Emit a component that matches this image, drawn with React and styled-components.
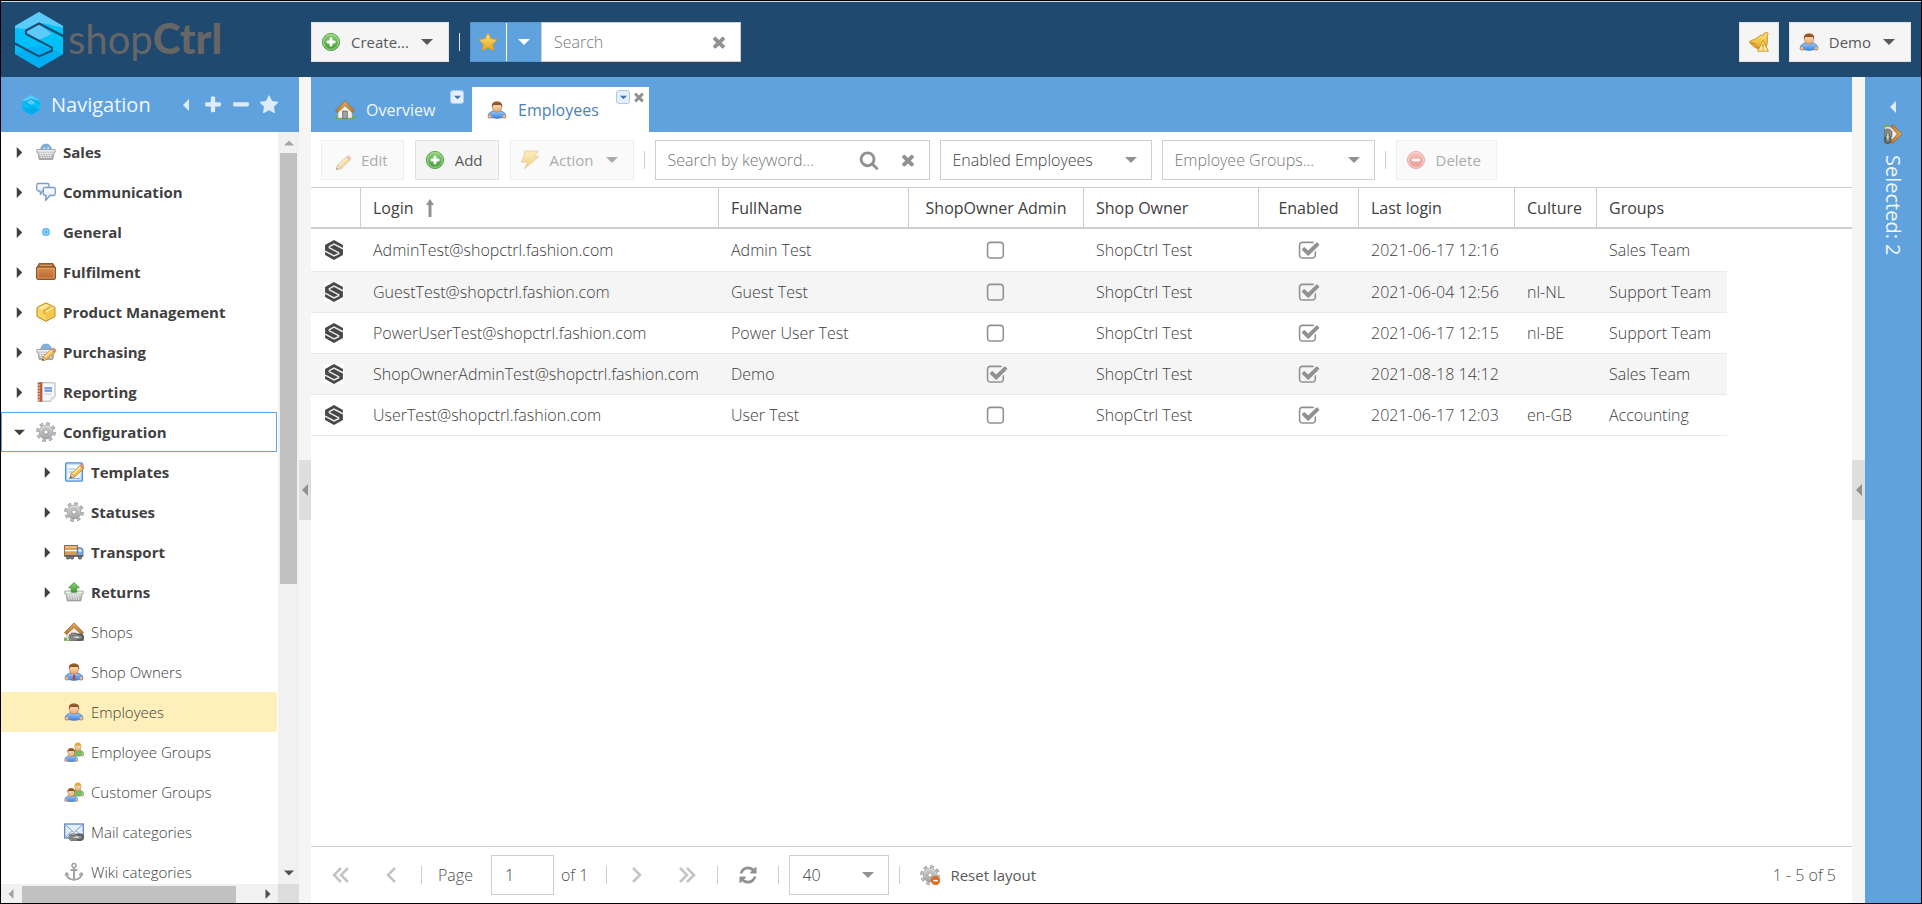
import React from "react";
import styled, { createGlobalStyle, css } from "styled-components";

const colors = {
  navy: "#1f496e",
  blue: "#5fa2dd",
  line: "#cecece",
  soft: "#f5f5f5",
  text: "#404040",
  muted: "#919191",
};

/* ---------- icons ---------- */

const Svg = styled.svg`
  display: block;
  flex: none;
  width: ${({ $size }) => $size || 20}px;
  height: ${({ $size }) => $size || 20}px;
  opacity: ${({ $faded }) => ($faded ? 0.5 : 1)};
`;

const Sprite = styled.svg`
  position: absolute;
  width: 0;
  height: 0;
`;

function Gradients() {
  const list = [
    ["gGreen", "#8fd07a", "#3f9c35"],
    ["gRed", "#f58a80", "#dd3b30"],
    ["gGold", "#ffe680", "#e6a21a"],
    ["gBlue", "#9ccbff", "#3a82e0"],
    ["gHair", "#a8692f", "#6b3a14"],
    ["gSkin", "#fbdcb8", "#e5a66c"],
    ["gGrey", "#e6e6e6", "#a0a0a0"],
    ["gBox", "#d98f4e", "#b96430"],
    ["gPaper", "#ffffff", "#d4e2f4"],
    ["gRoof", "#e0ab62", "#b97630"],
  ];
  return (
    <Sprite aria-hidden="true">
      <defs>
        {list.map(([id, from, to]) => (
          <linearGradient key={id} id={id} x1="0" y1="0" x2="0" y2="1">
            <stop offset="0" stopColor={from} />
            <stop offset="1" stopColor={to} />
          </linearGradient>
        ))}
      </defs>
    </Sprite>
  );
}

const Pencil = () => (
  <g>
    <path d="M3 17l1.4-4.6L13 4.6l3.4 3.2-8.6 8z" fill="#f6c24f" stroke="#b9822e" strokeWidth=".8" />
    <path d="M5.4 13.4l8.6-8" stroke="#ffe9a8" strokeWidth="1.4" />
    <path d="M3 17l1.4-4.6 3.4 3.4z" fill="#f0d3a8" stroke="#a8743a" strokeWidth=".6" />
    <path d="M3 17l.6-2 1.4 1.4z" fill="#444" />
    <path d="M13 4.6l1.4-1.2q1-.6 2 .4t.8 2.4l-.8 1.6z" fill="#ef9a84" stroke="#b56c53" strokeWidth=".6" />
  </g>
);

const Basket = () => (
  <g>
    <path d="M.8 7.500h18.400v2.800h-1L16.800 17.400H3.200L1.800 10.300h-1z" fill="url(#gGrey)" stroke="#999" strokeWidth=".8" />
    <path d="M3.500 11.500h13M4 13.500h12M4.500 15.500h11" stroke="#fff" strokeWidth="1" strokeDasharray="1.4 1" />
    <path d="M1.600 8.800h16.800" stroke="#f4f4f4" />
  </g>
);

const Gear = () => (
  <g>
    <circle cx="10" cy="10" r="8.400" fill="none" stroke="#8f8f8f" strokeWidth="2.800" strokeDasharray="3.500 3.100" />
    <circle cx="10" cy="10" r="6.900" fill="url(#gGrey)" stroke="#999" strokeWidth=".7" />
    <circle cx="10" cy="10" r="8.200" fill="none" stroke="#c4c4c4" strokeWidth="1.800" strokeDasharray="2.600 3.840" strokeDashoffset="-.4" />
    <circle cx="10" cy="10" r="4.200" fill="none" stroke="#b2b2b2" strokeWidth="1" />
    <circle cx="10" cy="10" r="2.200" fill="#fff" stroke="#8f8f8f" strokeWidth=".9" />
  </g>
);

const Link = () => (
  <g fill="none">
    <rect x="5.500" y="12.500" width="7.500" height="5.500" rx="2.700" fill="#8b8b8b" stroke="#5c5c5c" strokeWidth="2" />
    <rect x="11.500" y="12.500" width="7.500" height="5.500" rx="2.700" fill="#8b8b8b" stroke="#5c5c5c" strokeWidth="2" />
    <rect x="5.500" y="12.500" width="7.500" height="5.500" rx="2.700" stroke="#b5b5b5" strokeWidth=".8" />
    <path d="M10 15.200h5" stroke="#ddd" strokeWidth="1.400" />
  </g>
);

const Person = ({ tie, hair = "url(#gHair)", shirt = "url(#gBlue)", edge = "#3f74b8" }) => (
  <g>
    <path d="M1.200 17.200q-.6-3.400 2.400-5.200l2.600-1.200h7.600l2.600 1.200q3 1.800 2.400 5.200-1 1-3 .4-5.800 1.600-11.600 0-2 .6-3-.4z" fill={shirt} stroke={edge} strokeWidth=".7" />
    <circle cx="2.800" cy="16.400" r="1.700" fill="url(#gSkin)" stroke="#b9764a" strokeWidth=".5" />
    <circle cx="17.200" cy="16.400" r="1.700" fill="url(#gSkin)" stroke="#b9764a" strokeWidth=".5" />
    {tie && <path d="M7.200 11l2.800 3 2.800-3z" fill="#fff" />}
    {tie && <path d="M9.400 12h1.300l.8 4.600-1.400 1.400-1.400-1.400z" fill="#cf3a34" />}
    <path d="M5.600 4.600h8.800v4.200q-.6 3.400-4.400 3.400t-4.400-3.400z" fill="url(#gSkin)" stroke="#b9764a" strokeWidth=".6" />
    <path d="M4.800 7.400Q4.200 1.200 10 1.200t5.200 6.200q-1-2-1.600-2.600-3.400.6-6.800 0-1.200.8-2 2.600z" fill={hair} />
  </g>
);

const House = () => (
  <g>
    <path d="M0 15.600h20v3.200H0z" fill="#6fae4a" />
    <path d="M3 9.200L10 3.200l7 6v8.800H3z" fill="#f4f1ea" stroke="#b4aca0" strokeWidth=".6" />
    <rect x="7.500" y="11" width="5" height="7.600" fill="#8d8d8d" stroke="#6d6d6d" strokeWidth=".6" />
    <path d="M9.200 12v6M10.800 12v6" stroke="#c5c5c5" strokeWidth=".6" />
    <path d="M.4 10.600L10 .8l9.600 9.800-2.200 2L10 5.600l-7.400 7z" fill="url(#gRoof)" stroke="#97602a" strokeWidth=".7" />
  </g>
);

const drawings = {
  basket: (
    <>
      <path d="M4.500 9q.2-7 5.500-7t5.500 7z" fill="#7fb2dc" stroke="#5b8fbd" strokeWidth=".6" />
      <path d="M9 9.500l-1-4M11 9.500l1.500-4.500" stroke="#e7f2fb" strokeWidth="1.200" />
      <Basket />
    </>
  ),
  chat: (
    <g fill="url(#gPaper)" stroke="#7b9cc8" strokeWidth="1.300" strokeLinejoin="round">
      <path d="M2 1.500h9.500q1.500 0 1.500 1.500v4.500q0 1.500-1.500 1.500H6.500L4.500 12.500 4 9H2.500Q1 9 .8 7.500V3Q1 1.500 2 1.500z" />
      <path d="M9 5.500h8.500q1.800 0 1.800 1.700v4.600q0 1.700-1.800 1.700h-3.500l-4.500 5 .5-5H9q-1.700 0-1.700-1.700V7.200q0-1.700 1.700-1.700z" />
    </g>
  ),
  dot: (
    <>
      <circle cx="10" cy="10" r="4" fill="#5cb8ef" />
      <circle cx="10" cy="10" r="2.600" fill="#9bd6f8" />
      <circle cx="10" cy="10" r="1.500" fill="#57afe6" />
    </>
  ),
  crate: (
    <>
      <path d="M3 1.500h14l2.500 4.500H.5z" fill="#a9703b" stroke="#7a4a20" strokeWidth=".8" />
      <path d="M4 3.400h12" stroke="#d9a466" />
      <rect x=".6" y="5" width="18.800" height="12.400" rx="1" fill="url(#gBox)" stroke="#854a1e" strokeWidth="1" />
      <rect x="2" y="6.400" width="16" height="9.600" fill="none" stroke="#eab27c" strokeWidth=".6" />
    </>
  ),
  package: (
    <>
      <path d="M10 .8l9 4.600v9.200l-9 4.800-9-4.800V5.400z" fill="#f3c54a" stroke="#c18f1d" strokeWidth="1" strokeLinejoin="round" />
      <path d="M10 2l8 4-8 4.400L2 6z" fill="#ffe9a0" />
      <path d="M2 6.500l8 4.200v7.500l-8-4.200z" fill="#f8d566" />
      <path d="M13.500 4l-6.500 3.500v4l2.500 1.300V9l6.500-3.600z" fill="#e0a32a" opacity=".7" />
    </>
  ),
  purchase: (
    <>
      <path d="M4.500 9q.2-7 5.500-7t5.500 7z" fill="#7fb2dc" stroke="#5b8fbd" strokeWidth=".6" />
      <Basket />
      <g transform="translate(3.500 3) scale(.92)">
        <Pencil />
      </g>
    </>
  ),
  report: (
    <>
      <path d="M4 .8h15v14l-4.500 4.400H4z" fill="#f6f7f9" stroke="#a5abb5" strokeWidth=".9" />
      <path d="M19 14.800h-4.500v4.400z" fill="#dadde2" />
      <rect x="2" y=".8" width="4" height="18.400" fill="#c9603d" stroke="#96432a" strokeWidth=".6" />
      <path d="M1 3h3M1 6h3M1 9h3M1 12h3M1 15h3M1 18h3" stroke="#eee" strokeWidth=".9" />
      <rect x="8.500" y="5" width="7.500" height="5" fill="#7fa6e0" />
      <path d="M8.500 12h7M8.500 7.500h7.500" stroke="#b6c9e8" strokeWidth=".9" />
    </>
  ),
  gear: <Gear />,
  template: (
    <>
      <rect x="1.600" y=".8" width="16.800" height="18.400" rx="1.200" fill="#c5defa" stroke="#4f8fd6" strokeWidth="1.300" />
      <path d="M3.500 3h13v11l-4 3.500h-9z" fill="#fff" opacity=".8" />
      <path d="M4.500 7h6M4.500 10h4M4.500 16.500h11" stroke="#8bb6e6" />
      <g transform="translate(3 -1)">
        <Pencil />
      </g>
    </>
  ),
  truck: (
    <>
      <rect x=".6" y="3.500" width="12.800" height="10.500" fill="#d79a58" stroke="#8a5b2c" strokeWidth=".9" />
      <path d="M1 5h12" stroke="#f2d2a4" strokeWidth="1.200" />
      <path d="M1 8.600h12" stroke="#fff" strokeWidth="1.400" />
      <path d="M13.400 5.800h3.600q1.800.6 2 2.400V14h-5.600z" fill="#7ea8e0" stroke="#3d69a8" strokeWidth=".8" />
      <path d="M14.500 7.200h2.200q1 .5 1.100 2.600h-3.300z" fill="#e5f0ff" />
      <path d="M.6 13h18.600v1.800H.6z" fill="#666" />
      <circle cx="4" cy="15.400" r="2" fill="#555" />
      <circle cx="8" cy="15.400" r="2" fill="#555" />
      <circle cx="16" cy="15.400" r="2" fill="#555" />
      <circle cx="4" cy="15.400" r=".7" fill="#bbb" />
      <circle cx="8" cy="15.400" r=".7" fill="#bbb" />
      <circle cx="16" cy="15.400" r=".7" fill="#bbb" />
    </>
  ),
  returns: (
    <>
      <g transform="translate(0 1.500)">
        <Basket />
      </g>
      <path d="M10 .6l5.400 5.200h-2.700v4.400H7.300V5.800H4.600z" fill="url(#gGreen)" stroke="#3c8f32" strokeWidth=".8" />
    </>
  ),
  shops: (
    <>
      <House />
      <Link />
    </>
  ),
  house: <House />,
  owner: <Person tie edge="#3c6da8" />,
  person: <Person />,
  people: (
    <>
      <g transform="translate(7.500 -.5) scale(.64 .8)">
        <Person hair="#e0a82e" shirt="#78bf62" edge="#4a8f3c" />
      </g>
      <g transform="translate(0 5) scale(.72 .8)">
        <Person />
      </g>
    </>
  ),
  mail: (
    <>
      <rect x=".7" y="2" width="18.600" height="14" fill="#e3eefc" stroke="#5c86c4" strokeWidth="1.300" />
      <path d="M1.500 2.800L10 10.500l8.500-7.700M1.500 15.500L7.500 9M18.500 15.500L12.500 9" fill="none" stroke="#7d9fd0" />
      <Link />
    </>
  ),
  anchor: (
    <g fill="none" stroke="#a2a2a2" strokeWidth="2">
      <circle cx="10" cy="3.600" r="2" strokeWidth="1.500" />
      <path d="M10 5.500v12M6.500 8h7" />
      <path d="M2.500 11.500q.5 6 7.500 6.200 7-.2 7.500-6.200" />
      <path d="M.8 13.500l1.800-2.800 2.400 2.400M19.200 13.500l-1.800-2.800-2.400 2.400" strokeWidth="1.200" />
    </g>
  ),
  add: (
    <>
      <circle cx="10" cy="10" r="8.600" fill="url(#gGreen)" stroke="#5fa653" strokeWidth="1" />
      <circle cx="10" cy="10" r="7.400" fill="none" stroke="#b5e0a8" strokeWidth=".8" />
      <path d="M10 6.800v6.400M6.800 10h6.400" stroke="#fff" strokeWidth="2.800" strokeLinecap="round" />
    </>
  ),
  remove: (
    <>
      <circle cx="10" cy="10" r="8.600" fill="url(#gRed)" stroke="#e06a60" strokeWidth="1" />
      <circle cx="10" cy="10" r="7.400" fill="none" stroke="#fac4bf" strokeWidth=".8" />
      <path d="M7.200 10h5.600" stroke="#fff" strokeWidth="2.600" strokeLinecap="round" />
    </>
  ),
  pencil: (
    <g transform="translate(2.300 2.700)">
      <Pencil />
    </g>
  ),
  bolt: <path d="M5 1h13l-3.500 5.400H19L4.500 18.800 7.600 12H1l2.600-4.800z" fill="url(#gGold)" stroke="#dd9a2c" strokeWidth=".8" strokeLinejoin="round" />,
  star: <path d="M10 .8l2.800 6 6.600.8-4.800 4.500 1.300 6.600L10 15.500l-5.900 3.200 1.300-6.600L.6 7.600l6.600-.8z" fill="url(#gGold)" stroke="#d9a01e" strokeWidth=".8" strokeLinejoin="round" />,
  bell: (
    <>
      <path d="M15 2.800q-.4-2.200 1.600-2.200h1.600q1 .2.800 1.400L18.200 4q.6 6-.6 10.500l-6.600 3.300Q4 15.500.8 10.600q-.4-1.800 1.600-2.200 4.200-.6 7-3.600Q11.800 2.600 15 2.800z" fill="url(#gGold)" stroke="#c48a20" strokeWidth=".9" />
      <path d="M1.500 10.500q5 .5 9 6.500" stroke="#b87a18" fill="none" />
      <path d="M14 8.500l5.400 10.700H8.600z" fill="#fdeaa0" stroke="#d39a2c" strokeWidth="1" strokeLinejoin="round" />
      <path d="M14 12v3.600M14 16.600v1.200" stroke="#c98a1c" strokeWidth="1.300" />
    </>
  ),
  reset: (
    <>
      <Gear />
      <circle cx="15.600" cy="15.600" r="4.200" fill="#ec6b1e" stroke="#c3500f" strokeWidth=".7" />
      <path d="M13.300 15.600h4.600" stroke="#fff" strokeWidth="1.400" />
    </>
  ),
};

function Icon({ name, faded }) {
  return (
    <Svg viewBox="0 0 20 20" $faded={faded} aria-hidden="true">
      {drawings[name]}
    </Svg>
  );
}

const glyphs = {
  times:
    "M1490 1322q0 40-28 68l-136 136q-28 28-68 28t-68-28l-294-294-294 294q-28 28-68 28t-68-28l-136-136q-28-28-28-68t28-68l294-294-294-294q-28-28-28-68t28-68l136-136q28-28 68-28t68 28l294 294 294-294q28-28 68-28t68 28l136 136q28 28 28 68t-28 68l-294 294 294 294q28 28 28 68z",
  search:
    "M1216 832q0-185-131.500-316.500t-316.500-131.500-316.500 131.500-131.500 316.500 131.500 316.500 316.500 131.500 316.500-131.500 131.500-316.500zm512 832q0 52-38 90t-90 38q-54 0-90-38l-343-342q-179 124-399 124-143 0-273.500-55.500t-225-150-150-225-55.500-273.500 55.500-273.500 150-225 225-150 273.500-55.500 273.500 55.500 225 150 150 225 55.500 273.500q0 220-124 399l343 343q37 37 37 90z",
  refresh:
    "M1639 1056q0 5-1 7-64 268-268 434.500t-478 166.500q-146 0-282.500-55t-243.500-157l-129 129q-19 19-45 19t-45-19-19-45v-448q0-26 19-45t45-19h448q26 0 45 19t19 45-19 45l-137 137q71 66 161 102t187 36q134 0 250-65t186-179q11-17 53-117 8-23 30-23h192q13 0 22.500 9.500t9.500 22.500zm25-800v448q0 26-19 45t-45 19h-448q-26 0-45-19t-19-45 19-45l138-138q-148-137-349-137-134 0-250 65t-186 179q-11 17-53 117-8 23-30 23h-199q-13 0-22.500-9.500t-9.500-22.500v-7q65-268 270-434.500t480-166.500q146 0 284 55.500t245 156.500l130-129q19-19 45-19t45 19 19 45z",
  star:
    "M1728 647q0 22-26 48l-363 354 86 500q1 7 1 20 0 21-10.500 35.500t-30.500 14.500q-19 0-40-12l-449-236-449 236q-22 12-40 12-21 0-31.500-14.500t-10.500-35.500q0-6 2-20l86-500-364-354q-25-27-25-48 0-37 56-46l502-73 225-455q19-41 49-41t49 41l225 455 502 73q56 9 56 46z",
  plus: "M1600 736v192q0 40-28 68t-68 28h-416v416q0 40-28 68t-68 28h-192q-40 0-68-28t-28-68v-416h-416q-40 0-68-28t-28-68v-192q0-40 28-68t68-28h416v-416q0-40 28-68t68-28h192q40 0 68 28t28 68v416h416q40 0 68 28t28 68z",
  minus:
    "M1600 736v192q0 40-28 68t-68 28h-1216q-40 0-68-28t-28-68v-192q0-40 28-68t68-28h1216q40 0 68 28t28 68z",
  checked:
    "M1472 930v318q0 119-84.500 203.500t-203.500 84.500h-832q-119 0-203.500-84.500t-84.500-203.500v-832q0-119 84.500-203.500t203.500-84.500h832q63 0 117 25 15 7 18 23 3 17-9 29l-49 49q-10 10-23 10-3 0-9-2-23-6-45-6h-832q-66 0-113 47t-47 113v832q0 66 47 113t113 47h832q66 0 113-47t47-113v-254q0-13 9-22l64-64q10-10 23-10 6 0 12 3 20 8 20 29zm231-489l-814 814q-24 24-57 24t-57-24l-430-430q-24-24-24-57t24-57l110-110q24-24 57-24t57 24l263 263 647-647q24-24 57-24t57 24l110 110q24 24 24 57t-24 57z",
  unchecked:
    "M1184 256h-832q-66 0-113 47t-47 113v832q0 66 47 113t113 47h832q66 0 113-47t47-113v-832q0-66-47-113t-113-47zm288 160v832q0 119-84.500 203.500t-203.500 84.500h-832q-119 0-203.500-84.500t-84.500-203.500v-832q0-119 84.500-203.500t203.500-84.500h832q119 0 203.500 84.500t84.500 203.500z",
};

function Glyph({ name, size = 20, color = colors.muted }) {
  return (
    <Svg viewBox="0 0 1792 1792" $size={size} fill={color} aria-hidden="true">
      <path d={glyphs[name]} />
    </Svg>
  );
}

const carets = {
  down: "M0 3h12L6 9z",
  right: "M3 0l6 6-6 6z",
  left: "M9 0v12L3 6z",
  up: "M0 9h12L6 3z",
};

function Caret({ dir = "down", size = 12, color = colors.muted }) {
  return (
    <Svg viewBox="0 0 12 12" $size={size} fill={color} aria-hidden="true">
      <path d={carets[dir]} />
    </Svg>
  );
}

function Hexagon({ size, mono }) {
  return (
    <Svg viewBox="0 0 56 56" $size={size} aria-hidden="true">
      {mono ? (
        <path d="M28 0l25 14v28L28 56 3 42V14z" fill="#484848" />
      ) : (
        <>
          <path d="M28 0l24 14v28L28 56 4 42V14z" fill="#00c0f8" />
          <path d="M28 0L4 14v2l10 1 14-6.500 24 5V14zM28 12L16 18.500v3l12 6.500 13-6z" fill="#5ccbf9" />
          <path d="M28 34l12 2.500L28 43 16 36.500zM4 42l9-5 15 8 13-8 11 5-24 14z" fill="#00aef2" />
        </>
      )}
      <path
        d="M53 24.500L28 11.500 15 18.500v3.500l26 13.500v3L28 44.500 3 31"
        fill="none"
        stroke={mono ? "#fff" : colors.navy}
        strokeOpacity={mono ? 0.9 : size > 30 ? 1 : 0.35}
        strokeWidth={mono ? 4 : 2}
      />
    </Svg>
  );
}

/* ---------- shared pieces ---------- */

const plainButton = css`
  border: 0;
  padding: 0;
  background: none;
  font: inherit;
  color: inherit;
  cursor: pointer;
`;

const Button = styled.button`
  display: flex;
  align-items: center;
  gap: 10px;
  height: 40px;
  padding: ${({ $square }) => ($square ? "0 9px" : "0 15px 0 9px")};
  border: 1px solid #e1e1e1;
  background: ${colors.soft};
  color: #595959;
  font: 400 15px "Open Sans", sans-serif;
  white-space: nowrap;

  &:disabled {
    border-color: #efefef;
    background: #fafafa;
    color: #acacac;
  }
  svg:last-child:not(:first-child) {
    margin-left: 2px;
  }
`;

const IconButton = styled.button`
  ${plainButton}
  display: flex;
`;

const Separator = styled.span`
  flex: none;
  width: 1px;
  height: 18px;
  margin: 0 ${({ $gap }) => ($gap === undefined ? 10 : $gap)}px;
  background: ${({ $light }) => ($light ? "#e1e1e1" : colors.line)};
`;

const SeparatorSlot = styled.div`
  display: flex;
  align-items: center;
  height: 40px;
`;

const Field = styled.div`
  display: flex;
  align-items: center;
  gap: 20px;
  width: ${({ $width }) => $width}px;
  height: 40px;
  padding: 0 12px;
  border: 1px solid ${colors.line};
  background: #fff;

  input {
    flex: 1;
    min-width: 0;
    padding: 0;
    border: 0;
    outline: 0;
    background: none;
    font: inherit;
    color: ${colors.text};
  }
  input::placeholder {
    color: #777;
    opacity: 1;
  }
`;

const SelectBox = styled.div`
  display: grid;
  align-items: center;
  width: ${({ $width }) => $width}px;
  height: 40px;
  border: 1px solid ${colors.line};
  background: #fff;

  select,
  svg {
    grid-area: 1 / 1;
  }
  select {
    appearance: none;
    width: 100%;
    height: 38px;
    padding: 0 12px;
    border: 0;
    background: none;
    font: inherit;
    color: ${({ $empty }) => ($empty ? "#777" : colors.text)};
  }
  svg {
    justify-self: end;
    margin-right: 14px;
    pointer-events: none;
  }
`;

function Combo({ label, options, width, empty }) {
  return (
    <SelectBox $width={width} $empty={empty}>
      <select aria-label={label} defaultValue={options[0]}>
        {options.map((option) => (
          <option key={option}>{option}</option>
        ))}
      </select>
      <Caret />
    </SelectBox>
  );
}

/* ---------- header ---------- */

const Header = styled.header`
  display: flex;
  align-items: flex-start;
  height: 76px;
  flex: none;
  padding: 20px 10px 0;
  border-top: 1px solid #cfd9e2;
  background: ${colors.navy};
`;

const Brand = styled.a`
  display: flex;
  align-items: center;
  width: 300px;
  gap: 1px;
  height: 56px;
  margin-top: -10px;
  color: #666;
  font: 400 40px/48px Lato, sans-serif;
  text-decoration: none;

  span {
    margin-top: -4px;
  }
  b {
    font-weight: 900;
    font-size: 42px;
  }
`;

const StarGroup = styled.div`
  display: flex;
  height: 40px;
  border: 1px solid #5896cd;
  border-right: 0;
  background: ${colors.blue};

  button {
    ${plainButton}
    display: flex;
    align-items: center;
    justify-content: center;
    width: 35px;
  }
  button + button {
    border-left: 1px solid #fff;
  }
`;

const HeaderRight = styled.div`
  display: flex;
  gap: 10px;
  margin-left: auto;
`;

function TopBar() {
  return (
    <Header>
      <Brand href="#home">
        <Hexagon size={56} />
        <span>
          shop<b>Ctrl</b>
        </span>
      </Brand>
      <Button>
        <Icon name="add" />
        Create...
        <Caret color="#595959" />
      </Button>
      <SeparatorSlot>
        <Separator $light />
      </SeparatorSlot>
      <StarGroup>
        <button aria-label="Favourites">
          <Icon name="star" />
        </button>
        <button aria-label="Favourites menu">
          <Caret color="#fff" />
        </button>
      </StarGroup>
      <Field $width={200}>
        <input type="text" placeholder="Search" aria-label="Search" />
        <IconButton aria-label="Clear search">
          <Glyph name="times" size={18} />
        </IconButton>
      </Field>
      <HeaderRight>
        <Button $square aria-label="Notifications">
          <Icon name="bell" />
        </Button>
        <Button>
          <Icon name="person" />
          Demo
          <Caret color="#595959" />
        </Button>
      </HeaderRight>
    </Header>
  );
}

/* ---------- navigation ---------- */

const Sidebar = styled.nav`
  display: flex;
  flex-direction: column;
  width: 298px;
  flex: none;
  background: #fff;
`;

const SidebarHead = styled.div`
  display: flex;
  align-items: center;
  height: 55px;
  flex: none;
  padding: 0 20px;
  background: ${colors.blue};
  color: #f2f7fc;

  h2 {
    margin: 0 26px 0 10px;
    font-size: 20px;
    font-weight: 400;
  }
  button {
    justify-content: center;
    min-width: 18px;
  }
  button + button {
    margin-left: 8px;
  }
`;

const TreeArea = styled.div`
  display: grid;
  grid-template-columns: 1fr 21px;
  grid-template-rows: 1fr 19px;
  flex: 1;
  min-height: 0;
`;

const Tree = styled.ul`
  margin: 0;
  padding: 0 1px 0 0;
  min-height: 0;
  overflow: hidden;
  list-style: none;
`;

const Node = styled.a`
  display: flex;
  align-items: center;
  height: 40px;
  padding-left: ${({ $child }) => ($child ? 40 : 12)}px;
  border: 1px solid ${({ $focused }) => ($focused ? colors.blue : "transparent")};
  background: ${({ $active }) => ($active ? "#ffefbb" : "none")};
  color: ${colors.text};
  font-weight: ${({ $parent }) => ($parent ? 700 : 300)};
  font-size: 15px;
  line-height: 20px;
  text-decoration: none;
  white-space: nowrap;
`;

const Expander = styled.span`
  width: 22px;
  flex: none;
`;

const NodeText = styled.span`
  margin-left: 7px;
`;

const ScrollV = styled.div`
  display: flex;
  flex-direction: column;
  align-items: center;
  justify-content: space-between;
  padding: 6px 0;
  background: #f1f1f1;
`;

const ThumbV = styled.div`
  width: 17px;
  flex: 0 0 431px;
  margin: 5px 0 auto;
  background: #c1c1c1;
`;

const ScrollH = styled.div`
  display: flex;
  align-items: center;
  padding: 0 5px;
  background: #f1f1f1;
`;

const ThumbH = styled.div`
  width: 214px;
  height: 17px;
  margin: 2px auto 0 6px;
  background: #c1c1c1;
`;

const Corner = styled.div`
  background: #dcdcdc;
`;

const nodes = [
  { text: "Sales", icon: "basket", parent: true },
  { text: "Communication", icon: "chat", parent: true },
  { text: "General", icon: "dot", parent: true },
  { text: "Fulfilment", icon: "crate", parent: true },
  { text: "Product Management", icon: "package", parent: true },
  { text: "Purchasing", icon: "purchase", parent: true },
  { text: "Reporting", icon: "report", parent: true },
  { text: "Configuration", icon: "gear", parent: true, open: true },
  { text: "Templates", icon: "template", parent: true, child: true },
  { text: "Statuses", icon: "gear", parent: true, child: true },
  { text: "Transport", icon: "truck", parent: true, child: true },
  { text: "Returns", icon: "returns", parent: true, child: true },
  { text: "Shops", icon: "shops", child: true },
  { text: "Shop Owners", icon: "owner", child: true },
  { text: "Employees", icon: "person", child: true, active: true },
  { text: "Employee Groups", icon: "people", child: true },
  { text: "Customer Groups", icon: "people", child: true },
  { text: "Mail categories", icon: "mail", child: true },
  { text: "Wiki categories", icon: "anchor", child: true },
];

function Navigation() {
  return (
    <Sidebar>
      <SidebarHead>
        <Hexagon size={20} />
        <h2>Navigation</h2>
        <IconButton aria-label="Collapse">
          <Caret dir="left" color="#dfecf8" />
        </IconButton>
        <IconButton aria-label="Expand all">
          <Glyph name="plus" color="#dfecf8" />
        </IconButton>
        <IconButton aria-label="Collapse all">
          <Glyph name="minus" color="#dfecf8" />
        </IconButton>
        <IconButton aria-label="Favourite">
          <Glyph name="star" color="#dfecf8" />
        </IconButton>
      </SidebarHead>
      <TreeArea>
        <Tree>
          {nodes.map(({ text, icon, parent, child, open, active }) => (
            <li key={text}>
              <Node href={`#${text}`} $parent={parent} $child={child} $active={active} $focused={open}>
                <Expander>{parent && <Caret dir={open ? "down" : "right"} size={11} color="#404040" />}</Expander>
                <Icon name={icon} />
                <NodeText>{text}</NodeText>
              </Node>
            </li>
          ))}
        </Tree>
        <ScrollV>
          <Caret dir="up" size={10} color="#a3a3a3" />
          <ThumbV />
          <Caret size={10} color="#505050" />
        </ScrollV>
        <ScrollH>
          <Caret dir="left" size={10} color="#a3a3a3" />
          <ThumbH />
          <Caret dir="right" size={10} color="#505050" />
        </ScrollH>
        <Corner />
      </TreeArea>
    </Sidebar>
  );
}

/* ---------- employees grid ---------- */

const Main = styled.main`
  display: flex;
  flex: 1;
  flex-direction: column;
  min-width: 0;
  background: #fff;
`;

const TabBar = styled.div`
  display: flex;
  align-items: flex-end;
  gap: 5px;
  height: 55px;
  flex: none;
  padding-left: 9px;
  background: ${colors.blue};
`;

const Tab = styled.div`
  position: relative;
  display: flex;
  align-items: center;
  width: ${({ $width }) => $width}px;
  height: 45px;
  padding-left: 15px;
  background: ${({ $active }) => ($active ? "#fff" : "none")};
  color: ${({ $active }) => ($active ? "#4c81b5" : "#f2f7fc")};
  font-weight: 400;

  > button {
    ${plainButton}
    display: flex;
    align-items: center;
    gap: 11px;
  }
`;

const TabTools = styled.div`
  position: absolute;
  top: 3px;
  right: 3px;
  display: flex;
  align-items: center;
  gap: 2px;
`;

const TabMenu = styled.button`
  ${plainButton}
  display: flex;
  align-items: center;
  justify-content: center;
  width: 14px;
  height: 14px;
  border: 1px solid #a9caf0;
  border-radius: 3px;
  background: #e4effb;
`;

const Toolbar = styled.div`
  display: flex;
  align-items: center;
  gap: 10px;
  height: 55px;
  flex: none;
  padding: 0 10px;
`;

const ButtonRow = styled.div`
  display: flex;
  gap: 11px;
`;

const GridArea = styled.div`
  flex: 1;
  min-height: 0;
  overflow: hidden;
`;

const Table = styled.table`
  width: 100%;
  border-collapse: separate;
  border-spacing: 0;
  table-layout: fixed;
  color: ${colors.text};

  th {
    height: 42px;
    padding: 0 12px;
    border: solid ${colors.line};
    border-width: 1px 1px 2px 0;
    font-weight: 400;
    text-align: left;
    white-space: nowrap;
  }
  th:nth-last-child(-n + 2) {
    border-right: 0;
  }
  td {
    height: 41px;
    padding: 0 12px;
    border-bottom: 1px solid #e8e8e8;
    white-space: nowrap;
  }
  tbody tr:first-child td {
    height: 43px;
  }
  tbody tr:nth-child(even) td {
    background: ${colors.soft};
  }
  td.tick,
  th.tick {
    padding: 0;
    text-align: center;
  }
`;

const SortLabel = styled.span`
  display: flex;
  align-items: center;
  gap: 12px;
`;

const Tick = styled.label`
  display: inline-grid;
  width: 22px;
  vertical-align: middle;

  input,
  svg {
    grid-area: 1 / 1;
  }
  input {
    width: 22px;
    height: 22px;
    margin: 0;
    opacity: 0;
  }
`;

const RowLogo = styled.span`
  display: block;
  width: 20px;
  margin-left: 1px;
  background: #fff;
`;

const columns = [
  { key: "logo", width: 50 },
  { key: "login", label: "Login", width: 358, sorted: true },
  { key: "name", label: "FullName", width: 190 },
  { key: "admin", label: "ShopOwner Admin", width: 175, tick: true },
  { key: "owner", label: "Shop Owner", width: 175 },
  { key: "enabled", label: "Enabled", width: 100, tick: true },
  { key: "last", label: "Last login", width: 156 },
  { key: "culture", label: "Culture", width: 82 },
  { key: "groups", label: "Groups", width: 130 },
];

const employees = [
  { login: "AdminTest@shopctrl.fashion.com", name: "Admin Test", admin: false, last: "2021-06-17 12:16", culture: "", groups: "Sales Team" },
  { login: "GuestTest@shopctrl.fashion.com", name: "Guest Test", admin: false, last: "2021-06-04 12:56", culture: "nl-NL", groups: "Support Team" },
  { login: "PowerUserTest@shopctrl.fashion.com", name: "Power User Test", admin: false, last: "2021-06-17 12:15", culture: "nl-BE", groups: "Support Team" },
  { login: "ShopOwnerAdminTest@shopctrl.fashion.com", name: "Demo", admin: true, last: "2021-08-18 14:12", culture: "", groups: "Sales Team" },
  { login: "UserTest@shopctrl.fashion.com", name: "User Test", admin: false, last: "2021-06-17 12:03", culture: "en-GB", groups: "Accounting" },
];

function TickCell({ on, label }) {
  return (
    <Tick>
      <input type="checkbox" defaultChecked={on} aria-label={label} />
      <Glyph name={on ? "checked" : "unchecked"} size={22} />
    </Tick>
  );
}

function EmployeeTable() {
  return (
    <Table>
      <colgroup>
        {columns.map((column) => (
          <col key={column.key} width={column.width} />
        ))}
        <col />
      </colgroup>
      <thead>
        <tr>
          {columns.map(({ key, label, sorted, tick }) => (
            <th key={key} className={tick ? "tick" : ""}>
              {sorted ? (
                <SortLabel>
                  {label}
                  <svg width="8" height="18" viewBox="0 0 8 18" aria-hidden="true">
                    <path d="M4 0l4 6H5.500v12h-3V6H0z" fill={colors.muted} />
                  </svg>
                </SortLabel>
              ) : (
                label
              )}
            </th>
          ))}
          <th />
        </tr>
      </thead>
      <tbody>
        {employees.map((row) => (
          <tr key={row.login}>
            <td>
              <RowLogo>
                <Hexagon size={20} mono />
              </RowLogo>
            </td>
            <td>{row.login}</td>
            <td>{row.name}</td>
            <td className="tick">
              <TickCell on={row.admin} label={`${row.name} shop owner admin`} />
            </td>
            <td>ShopCtrl Test</td>
            <td className="tick">
              <TickCell on label={`${row.name} enabled`} />
            </td>
            <td>{row.last}</td>
            <td>{row.culture}</td>
            <td>{row.groups}</td>
          </tr>
        ))}
      </tbody>
    </Table>
  );
}

/* ---------- paging ---------- */

const Footer = styled.footer`
  display: flex;
  align-items: center;
  height: 57px;
  flex: none;
  padding: 0 16px 0 10px;
  border-top: 1px solid ${colors.line};
  color: #505050;

  > label {
    display: flex;
    align-items: center;
    gap: 18px;
    margin: 0 7px 0 6px;
  }
`;

const PagerButton = styled.button`
  ${plainButton}
  display: flex;
  align-items: center;
  justify-content: center;
  gap: 10px;
  width: ${({ $wide }) => ($wide ? "auto" : "40px")};
  height: 40px;
  color: #595959;
  font-weight: 400;
  font-size: 15px;
`;

const PageInput = styled.input`
  width: 63px;
  height: 40px;
  padding: 0 13px;
  border: 1px solid ${colors.line};
  font: inherit;
  color: ${colors.text};
`;

const Spacer = styled.span`
  width: ${({ $width }) => $width}px;
  flex: none;
`;

const Total = styled.span`
  margin-left: auto;
`;

function Chevron({ path }) {
  return (
    <Svg viewBox="0 0 20 20" fill="none" stroke="#c4c4c4" strokeWidth="2.500" aria-hidden="true">
      <path d={path} />
    </Svg>
  );
}

function Pager() {
  return (
    <Footer>
      <PagerButton aria-label="First page">
        <Chevron path="M10 3l-7 7 7 7M17 3l-7 7 7 7" />
      </PagerButton>
      <Spacer $width={10} />
      <PagerButton aria-label="Previous page">
        <Chevron path="M14 3l-7 7 7 7" />
      </PagerButton>
      <Separator />
      <label>
        Page
        <PageInput type="text" defaultValue="1" />
      </label>
      <span>of 1</span>
      <Spacer $width={8} />
      <Separator />
      <PagerButton aria-label="Next page">
        <Chevron path="M6 3l7 7-7 7" />
      </PagerButton>
      <Spacer $width={10} />
      <PagerButton aria-label="Last page">
        <Chevron path="M3 3l7 7-7 7M10 3l7 7-7 7" />
      </PagerButton>
      <Separator />
      <PagerButton aria-label="Refresh">
        <Glyph name="refresh" />
      </PagerButton>
      <Separator />
      <Combo label="Page size" options={["40", "80"]} width={100} />
      <Separator />
      <Spacer $width={10} />
      <PagerButton $wide>
        <Icon name="reset" />
        Reset layout
      </PagerButton>
      <Total>1 - 5 of 5</Total>
    </Footer>
  );
}

function Employees() {
  return (
    <Main>
      <TabBar>
        <Tab $width={147}>
          <button>
            <Icon name="house" />
            Overview
          </button>
          <TabTools>
            <TabMenu aria-label="Overview menu">
              <Caret size={7} color="#3f74b8" />
            </TabMenu>
          </TabTools>
        </Tab>
        <Tab $width={177} $active>
          <button>
            <Icon name="person" />
            Employees
          </button>
          <TabTools>
            <TabMenu aria-label="Employees menu">
              <Caret size={7} color="#3f74b8" />
            </TabMenu>
            <IconButton aria-label="Close tab">
              <Glyph name="times" size={14} />
            </IconButton>
          </TabTools>
        </Tab>
      </TabBar>
      <Toolbar>
        <ButtonRow>
          <Button disabled>
            <Icon name="pencil" faded />
            Edit
          </Button>
          <Button>
            <Icon name="add" />
            Add
          </Button>
          <Button disabled>
            <Icon name="bolt" faded />
            Action
            <Caret color="#acacac" />
          </Button>
        </ButtonRow>
        <Separator $gap={0} />
        <Field $width={275}>
          <input type="text" placeholder="Search by keyword..." aria-label="Search by keyword" />
          <IconButton aria-label="Search">
            <Glyph name="search" />
          </IconButton>
          <IconButton aria-label="Clear keyword">
            <Glyph name="times" size={18} />
          </IconButton>
        </Field>
        <Combo label="Employee filter" options={["Enabled Employees", "All Employees"]} width={212} />
        <Combo label="Employee groups" options={["Employee Groups...", "Sales Team"]} width={213} empty />
        <Separator $gap={0} />
        <Button disabled>
          <Icon name="remove" faded />
          Delete
        </Button>
      </Toolbar>
      <GridArea>
        <EmployeeTable />
      </GridArea>
      <Pager />
    </Main>
  );
}

/* ---------- frame ---------- */

const Splitter = styled.div`
  display: flex;
  align-items: center;
  width: ${({ $width }) => $width}px;
  flex: none;
  background: ${colors.soft};

  button {
    ${plainButton}
    display: flex;
    align-items: center;
    justify-content: flex-end;
    width: 100%;
    height: 60px;
    background: #dedede;
  }
`;

const Selected = styled.aside`
  display: flex;
  flex-direction: column;
  align-items: center;
  gap: 11px;
  width: 56px;
  flex: none;
  padding-top: 24px;
  background: ${colors.blue};
  color: #f2f7fc;
  font-size: 20px;
  font-weight: 400;

  > svg {
    transform: rotate(90deg);
  }
  span {
    writing-mode: vertical-rl;
  }
`;

const Body = styled.div`
  display: flex;
  flex: 1;
  min-height: 0;
`;

const Page = styled.div`
  display: flex;
  flex-direction: column;
  height: 100vh;
  border: 1px solid #000;
  font: 300 16px/22px "Open Sans", sans-serif;
  color: ${colors.text};
`;

const GlobalStyle = createGlobalStyle`
  *, *::before, *::after {
    box-sizing: border-box;
  }
  body {
    margin: 0;
  }
`;

export default function App() {
  return (
    <Page>
      <GlobalStyle />
      <Gradients />
      <TopBar />
      <Body>
        <Navigation />
        <Splitter $width={12}>
          <button aria-label="Collapse navigation">
            <Caret dir="left" />
          </button>
        </Splitter>
        <Employees />
        <Splitter $width={13}>
          <button aria-label="Expand selection">
            <Caret dir="left" />
          </button>
        </Splitter>
        <Selected>
          <IconButton aria-label="Expand selected">
            <Caret dir="left" color="#dfecf8" />
          </IconButton>
          <Icon name="shops" />
          <span>Selected: 2</span>
        </Selected>
      </Body>
    </Page>
  );
}
